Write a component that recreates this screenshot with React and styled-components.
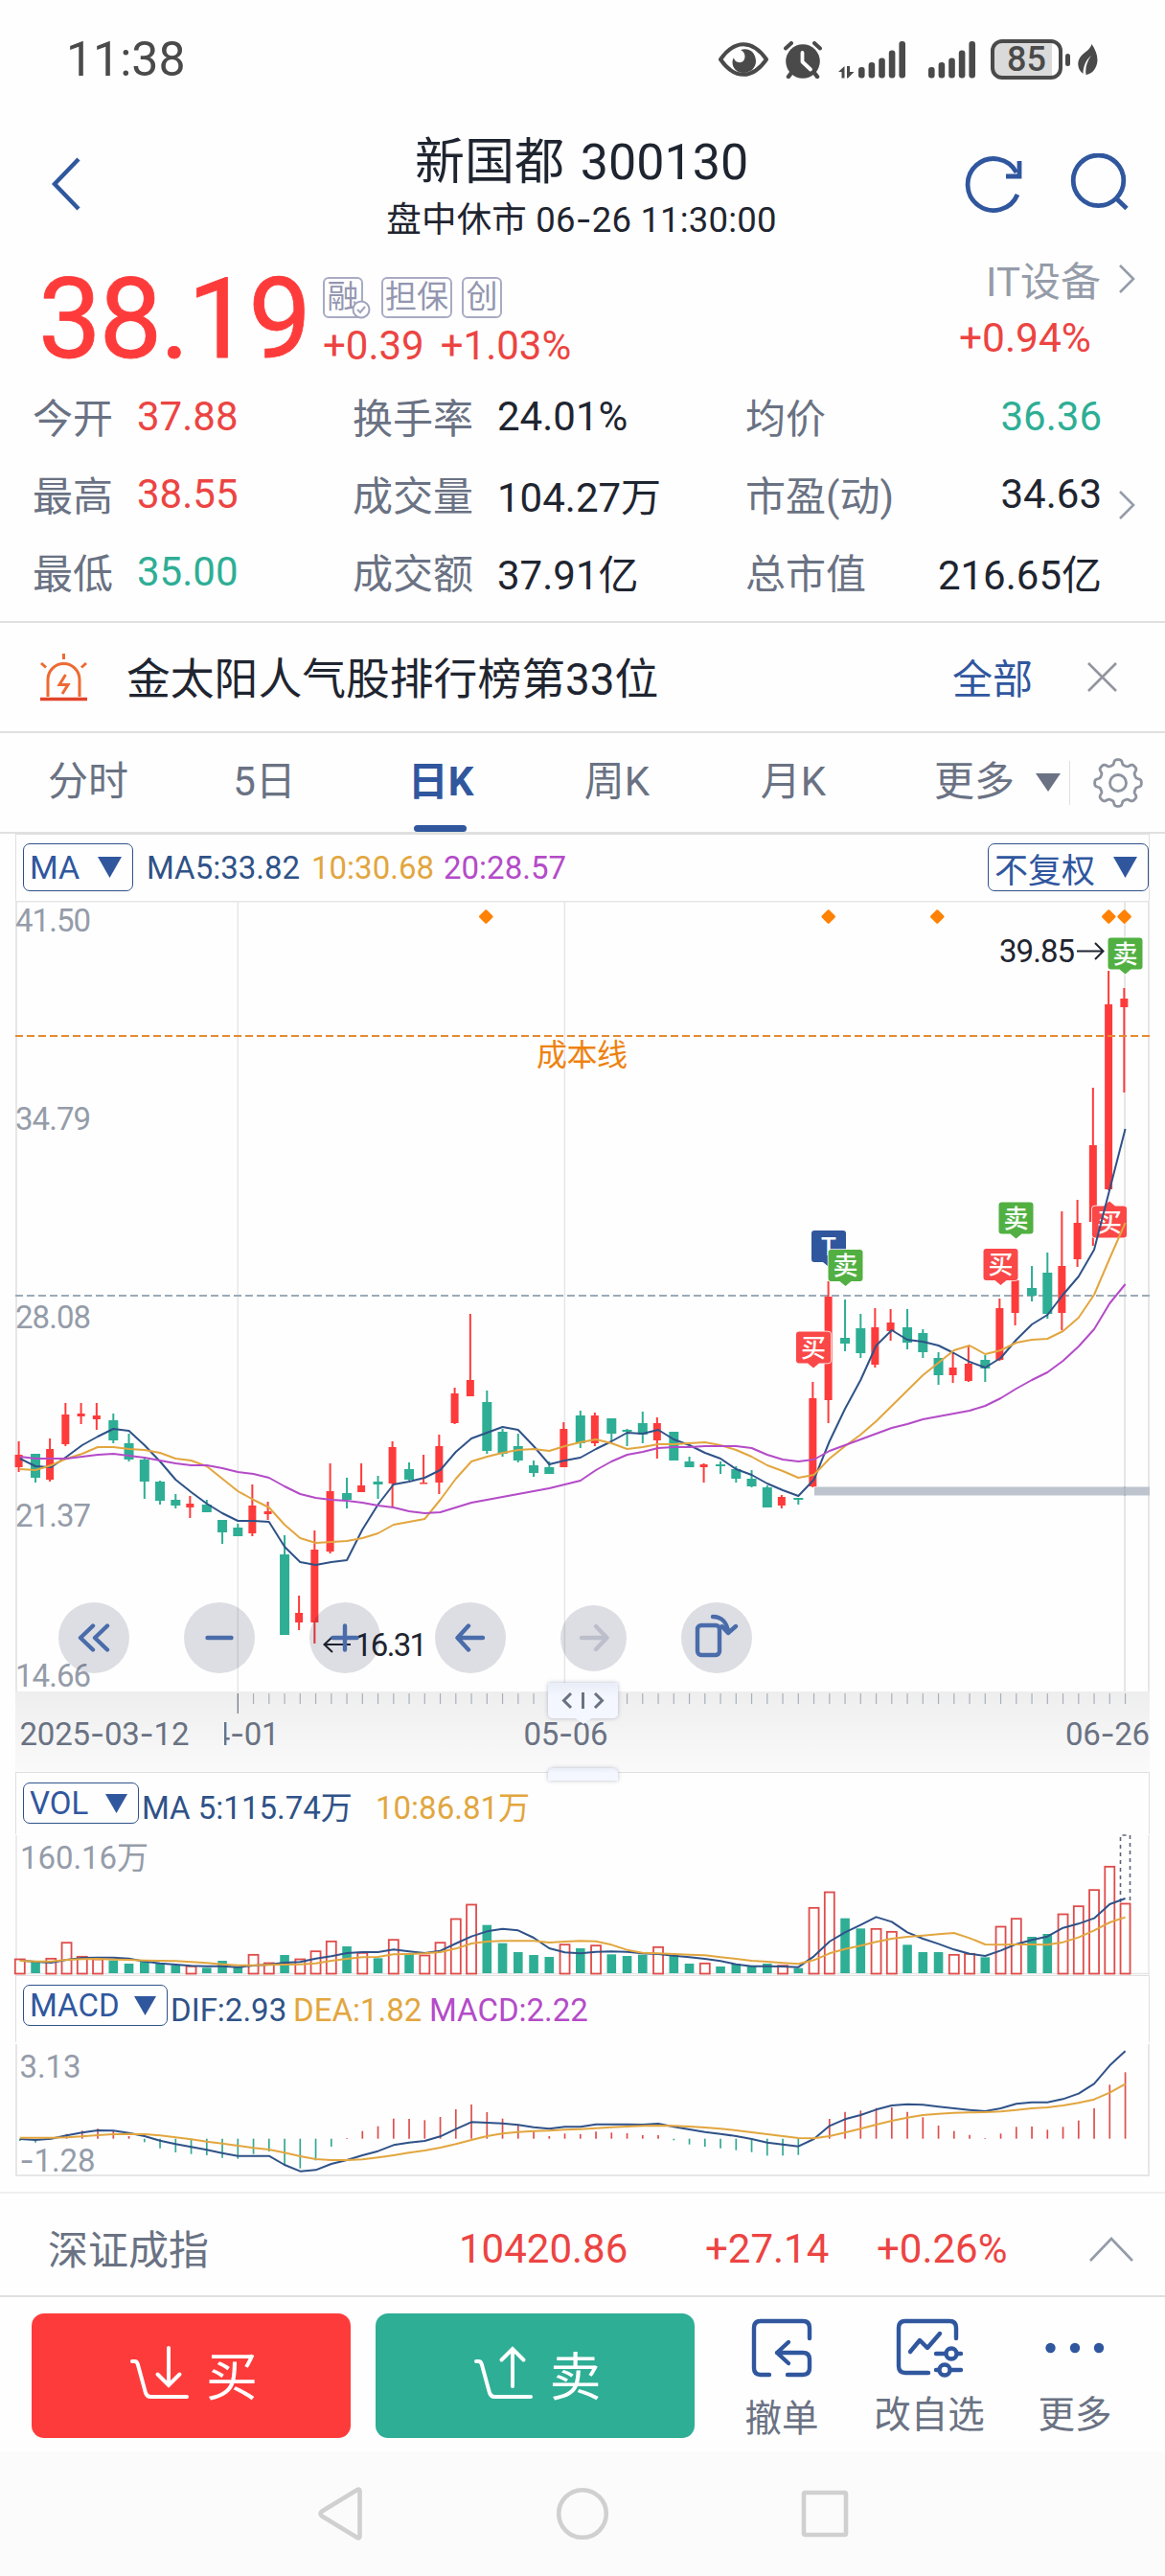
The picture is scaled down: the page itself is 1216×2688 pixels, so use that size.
import styled, { createGlobalStyle } from "styled-components";

const RED = "#fe3b3b";
const GREEN = "#2eae95";
const BLUE = "#30579e";
const NAVY = "#2f5288";
const YELLOW = "#e2a63f";
const PURPLE = "#b44bc8";
const GRAY = "#6a7283";
const LIGHT = "#959ca9";
const DARK = "#1f2530";
const LINE = "#e0e0e0";
const TEXT_RED = "#ec4442";

const GlobalStyle = createGlobalStyle`
  * {
    box-sizing: border-box;
  }

  body {
    margin: 0;
    background: #fefefe;
    color: ${DARK};
    font-family: Roboto, "Noto Sans CJK SC", sans-serif;
    font-size: 42px;
    white-space: nowrap;
  }

  svg {
    display: block;
    flex: none;
  }
`;

const Screen = styled.div`
  width: 1216px;
  height: 2688px;
  overflow: hidden;
`;

const StatusBar = styled.div`
  display: flex;
  justify-content: space-between;
  align-items: center;
  height: 124px;
  padding: 0 70px 0 69px;
  color: #4a4a4a;
  font-size: 50px;
`;

const StatusIcons = styled.div`
  display: flex;
  align-items: center;
`;

const Gap = styled.div`
  width: ${(p) => p.w}px;
`;

const Battery = styled.div`
  display: flex;
  align-items: center;
  justify-content: center;
  width: 75px;
  height: 42px;
  border: 4px solid #4a4a4a;
  border-radius: 12px;
  background: linear-gradient(to right, #dadada 60px, #fefefe 60px);
  font-size: 36px;
  font-weight: 500;
  line-height: 34px;
`;

const BatteryNub = styled.div`
  width: 5px;
  height: 13px;
  margin: 0 8px 0 3px;
  border-radius: 3px;
  background: #4a4a4a;
`;

const Header = styled.div`
  display: grid;
  grid-template-columns: 1fr auto 1fr;
  align-items: center;
  height: 136px;
  padding: 0 37px 0 35px;
`;

const BackIcon = styled.svg`
  margin-left: 14px;
`;

const Titles = styled.div`
  margin-top: 13px;
  text-align: center;
`;

const Title = styled.div`
  font-size: 52px;
  line-height: 61px;
  word-spacing: 4px;
`;

const SubTitle = styled.div`
  font-size: 36.5px;
  line-height: 58px;
  letter-spacing: 0.2px;
`;

const Dash = styled.span`
  font-family: Inter, sans-serif;
`;

const HeaderActions = styled.div`
  display: flex;
  justify-content: flex-end;
  gap: 46px;
`;

const Quote = styled.div`
  display: flex;
  height: 135px;
  padding-left: 40px;
`;

const Price = styled.div`
  width: 297px;
  color: ${RED};
  font-size: 117px;
  font-weight: 400;
  letter-spacing: -2.2px;
  line-height: 147px;
  -webkit-text-stroke: 0.8px ${RED};
`;

const QuoteInfo = styled.div`
  flex: 1;
`;

const Tags = styled.div`
  display: flex;
  margin-top: 29px;
`;

const Tag = styled.div`
  position: relative;
  width: ${(p) => p.w}px;
  height: 43px;
  margin-right: ${(p) => p.gap}px;
  border: 2px solid #a9abc4;
  border-radius: 6px;
  color: #9396b0;
  font-size: 33px;
  line-height: 38px;
  text-align: center;
`;

const TagCheck = styled.svg`
  position: absolute;
  right: -10px;
  bottom: -3px;
`;

const Change = styled.div`
  display: flex;
  gap: 17px;
  color: ${TEXT_RED};
  font-size: 42px;
  line-height: 58px;
`;

const Industry = styled.div`
  padding-right: 31px;
`;

const IndustryName = styled.div`
  display: flex;
  align-items: center;
  justify-content: flex-end;
  gap: 18px;
  height: 61px;
  color: ${LIGHT};
`;

const IndustryChange = styled.div`
  padding-right: 46px;
  color: ${TEXT_RED};
  font-size: 42.5px;
  line-height: 64px;
  text-align: right;
`;

const Stats = styled.div`
  display: grid;
  grid-template-columns: 109px 225px 151px 259px 180px 192px 66px;
  grid-template-rows: repeat(3, 81px);
  align-items: center;
  height: 255px;
  padding-left: 34px;
  border-bottom: 2px solid ${LINE};
`;

const StatLabel = styled.div`
  margin-top: -5px;
  color: ${GRAY};
`;

const StatValue = styled.div`
  margin-top: -2px;
  color: ${(p) => p.color || DARK};
  text-align: ${(p) => (p.$end ? "right" : "left")};
`;

const StatMore = styled.div`
  grid-column: 7;
  grid-row: 2;
  padding: 20px 0 0 17px;
`;

const Notice = styled.div`
  display: flex;
  align-items: center;
  height: 115px;
  padding: 0 50px 0 41px;
  border-bottom: 2px solid ${LINE};
`;

const NoticeText = styled.div`
  flex: 1;
  margin: -4px 0 0 40px;
  font-size: 45.8px;
`;

const NoticeAll = styled.div`
  margin: -2px 57px 0 0;
  color: ${BLUE};
`;

const Tabs = styled.div`
  display: flex;
  height: 105px;
  border-bottom: 2px solid ${LINE};
  color: ${GRAY};
  line-height: 102px;
`;

const Tab = styled.div`
  position: relative;
  width: 184px;
  text-align: center;
  color: ${(p) => (p.$active ? BLUE : GRAY)};
  font-weight: ${(p) => (p.$active ? 700 : 400)};

  &::after {
    content: "";
    display: ${(p) => (p.$active ? "block" : "none")};
    position: absolute;
    left: 64px;
    bottom: 0;
    width: 55px;
    height: 7px;
    border-radius: 4px;
    background: ${BLUE};
  }
`;

const MoreTab = styled.div`
  display: flex;
  align-items: center;
  gap: 22px;
  width: 196px;
  height: 102px;
  padding-left: 55px;
`;

const TabSettings = styled.div`
  display: flex;
  align-items: center;
  height: 46px;
  margin-top: 29px;
  padding-left: 24px;
  border-left: 1px solid ${LINE};
`;

const IndicatorBar = styled.div`
  display: flex;
  align-items: flex-start;
  height: ${(p) => p.h}px;
  margin: 0 16px;
  padding: ${(p) => p.top}px 0 0 7px;
  border: 1px solid ${LINE};
  border-bottom: none;
`;

const Select = styled.div`
  display: flex;
  align-items: center;
  justify-content: space-between;
  width: ${(p) => p.w}px;
  height: ${(p) => p.h}px;
  padding: 0 11px 0 6px;
  border: 1.5px solid ${NAVY};
  border-radius: 7px;
  color: ${BLUE};
  font-size: ${(p) => p.size}px;
`;

const Legend = styled.div`
  width: ${(p) => p.w}px;
  color: ${(p) => p.color};
  font-size: 33px;
  line-height: ${(p) => p.lh}px;
`;

const Spacer = styled.div`
  flex: 1;
`;

const PriceChart = styled.div`
  position: relative;
  height: 909px;
`;

const ChartTools = styled.div`
  position: absolute;
  left: 61px;
  top: 732px;
  display: flex;
  align-items: center;
  height: 74px;
`;

const ToolButton = styled.div`
  display: flex;
  align-items: center;
  justify-content: center;
  width: ${(p) => p.size || 74}px;
  height: ${(p) => p.size || 74}px;
  margin-right: ${(p) => p.gap || 57}px;
  border-radius: 50%;
  background: rgba(0, 8, 48, 0.13);
`;

const Handle = styled.div`
  position: absolute;
  left: 572px;
  top: ${(p) => p.top}px;
  width: 73px;
  height: ${(p) => p.h}px;
  border-radius: ${(p) => p.radius};
  background: linear-gradient(#e9edf7, #f4f7ff 40%);
  box-shadow: 0 0 4px rgba(80, 90, 120, 0.4);
`;

const IndexBar = styled.div`
  display: grid;
  grid-template-columns: 429px 257px 179px 222px 1fr;
  align-items: center;
  height: 110px;
  padding: 9px 0 0 50px;
  border-top: 2px solid #f0f0f0;
  border-bottom: 2px solid ${LINE};
  color: ${TEXT_RED};
`;

const ActionBar = styled.div`
  display: flex;
  height: 161px;
  padding: 17px 0 0 33px;
`;

const TradeButton = styled.div`
  display: flex;
  align-items: center;
  justify-content: center;
  gap: 17px;
  width: 333px;
  height: 130px;
  margin-right: 25.5px;
  padding: 0 0 6px 6px;
  border-radius: 13px;
  background: ${(p) => p.color};
  color: #fff;
  font-size: 54px;
`;

const Action = styled.div`
  display: flex;
  flex-direction: column;
  align-items: center;
  width: ${(p) => p.w}px;
  margin-left: ${(p) => p.left}px;
  padding-top: 4px;
  color: ${GRAY};
  font-size: 38.5px;
  line-height: ${(p) => p.lh}px;
`;

const NavBar = styled.div`
  display: flex;
  height: 130px;
  padding: 36px 0 0 329px;
  background: #fbfbfb;
`;

// y pixels: colour, high, body top, body bottom, low
const candles = [
  ["r", 1504, 1518, 1531, 1536], ["g", 1517, 1517, 1542, 1547], ["r", 1501, 1512, 1544, 1546],
  ["r", 1464, 1476, 1507, 1509], ["r", 1464, 1475, 1478, 1486], ["r", 1464, 1477, 1481, 1492],
  ["g", 1475, 1482, 1503, 1506], ["g", 1496, 1506, 1523, 1525], ["g", 1520, 1523, 1546, 1564],
  ["g", 1545, 1546, 1566, 1570], ["g", 1559, 1565, 1571, 1574], ["r", 1561, 1569, 1573, 1584],
  ["g", 1565, 1570, 1578, 1578], ["g", 1586, 1586, 1599, 1611], ["g", 1590, 1594, 1603, 1603],
  ["r", 1549, 1571, 1600, 1603], ["r", 1567, 1577, 1580, 1586], ["g", 1602, 1622, 1706, 1706],
  ["r", 1665, 1683, 1693, 1701], ["r", 1597, 1617, 1693, 1715], ["r", 1527, 1556, 1619, 1621],
  ["g", 1542, 1558, 1565, 1574], ["r", 1527, 1550, 1557, 1557], ["g", 1540, 1546, 1549, 1564],
  ["r", 1504, 1510, 1548, 1573], ["g", 1526, 1533, 1544, 1545], ["r", 1518, 1547, 1548, 1548],
  ["r", 1497, 1509, 1547, 1559], ["r", 1448, 1454, 1485, 1486], ["r", 1371, 1440, 1457, 1457],
  ["g", 1451, 1463, 1514, 1517], ["g", 1491, 1494, 1517, 1520], ["g", 1496, 1509, 1524, 1526],
  ["g", 1524, 1529, 1537, 1541], ["g", 1525, 1531, 1538, 1538], ["r", 1484, 1491, 1531, 1531],
  ["g", 1472, 1477, 1506, 1511], ["r", 1474, 1477, 1506, 1509], ["g", 1480, 1480, 1496, 1504],
  ["g", 1491, 1492, 1494, 1509], ["g", 1473, 1485, 1497, 1506], ["r", 1479, 1485, 1503, 1522],
  ["g", 1494, 1494, 1524, 1524], ["g", 1520, 1525, 1531, 1531], ["r", 1527, 1528, 1531, 1547],
  ["g", 1525, 1528, 1530, 1538], ["g", 1530, 1533, 1543, 1547], ["g", 1534, 1543, 1551, 1552],
  ["g", 1550, 1552, 1573, 1573], ["r", 1560, 1562, 1571, 1574], ["g", 1563, 1563, 1565, 1570],
  ["r", 1442, 1459, 1551, 1552], ["r", 1337, 1353, 1461, 1485], ["g", 1356, 1396, 1402, 1410],
  ["g", 1371, 1386, 1412, 1417], ["r", 1365, 1385, 1424, 1427], ["r", 1366, 1380, 1389, 1399],
  ["g", 1366, 1385, 1401, 1408], ["g", 1387, 1391, 1411, 1417], ["g", 1411, 1417, 1435, 1445],
  ["r", 1411, 1427, 1435, 1443], ["r", 1404, 1423, 1441, 1442], ["g", 1414, 1419, 1428, 1442],
  ["r", 1355, 1365, 1419, 1420], ["r", 1330, 1336, 1370, 1383], ["g", 1321, 1344, 1352, 1358],
  ["g", 1307, 1328, 1371, 1376], ["r", 1264, 1321, 1370, 1388], ["r", 1252, 1276, 1314, 1322],
  ["r", 1135, 1195, 1275, 1300], ["r", 1013, 1048, 1241, 1242], ["r", 1031, 1042, 1051, 1140],
];

const ma5 = [
  1522, 1530, 1531, 1520, 1508, 1499, 1491, 1493, 1508, 1525, 1544, 1557, 1569, 1579, 1587, 1587, 1588, 1614,
  1630, 1633, 1630, 1628, 1596, 1570, 1549, 1546, 1542, 1534, 1515, 1501, 1495, 1489, 1492, 1509, 1528, 1524,
  1521, 1512, 1504, 1495, 1496, 1492, 1502, 1508, 1516, 1522, 1533, 1539, 1548, 1555, 1561, 1544, 1504, 1470,
  1440, 1404, 1388, 1398, 1400, 1404, 1412, 1421, 1427, 1417, 1398, 1382, 1372, 1351, 1332, 1304, 1241, 1178,
];
const ma10 = [
  1533, 1534, 1529, 1522, 1517, 1510, 1510, 1512, 1513, 1516, 1522, 1524, 1530, 1543, 1556, 1565, 1573, 1591,
  1605, 1610, 1609, 1608, 1605, 1600, 1591, 1588, 1585, 1565, 1543, 1525, 1520, 1516, 1513, 1512, 1514, 1509,
  1505, 1502, 1506, 1512, 1510, 1507, 1507, 1506, 1505, 1508, 1513, 1520, 1529, 1535, 1542, 1539, 1522, 1509,
  1497, 1483, 1467, 1451, 1435, 1422, 1409, 1404, 1413, 1409, 1401, 1398, 1397, 1389, 1375, 1351, 1313, 1276,
];
const ma20 = [
  1520, 1522, 1522, 1522, 1520, 1518, 1517, 1519, 1521, 1524, 1527, 1529, 1529, 1532, 1536, 1538, 1542, 1551,
  1559, 1563, 1565, 1566, 1568, 1571, 1573, 1577, 1579, 1578, 1573, 1568, 1565, 1562, 1559, 1556, 1553, 1549,
  1545, 1534, 1525, 1518, 1515, 1511, 1510, 1510, 1509, 1509, 1509, 1511, 1518, 1523, 1525, 1523, 1514, 1508,
  1502, 1496, 1490, 1486, 1481, 1478, 1475, 1472, 1467, 1459, 1449, 1440, 1432, 1420, 1405, 1387, 1360, 1340,
];

// lower panels are kept in thirds of a pixel below y = 1840
const volumes = [
  612, 620, 610, 560, 604, 612, 617, 627, 620, 625, 632, 634, 640, 618, 637, 598, 624, 600,
  612, 587, 556, 573, 592, 610, 551, 597, 600, 560, 486, 441, 506, 563, 591, 600, 606, 566,
  579, 569, 598, 603, 599, 574, 600, 627, 625, 636, 628, 636, 627, 632, 641, 451, 402, 485,
  517, 517, 526, 568, 591, 591, 598, 595, 607, 510, 485, 543, 534, 471, 446, 395, 322, 438,
];
const volMa5 = [
  617, 621, 624, 615, 609, 608, 608, 611, 620, 626, 630, 634, 635, 635, 638, 633, 630, 624,
  622, 611, 604, 594, 591, 591, 583, 589, 594, 587, 564, 542, 526, 518, 523, 546, 579, 592,
  595, 590, 589, 590, 595, 597, 602, 607, 612, 619, 629, 635, 635, 636, 638, 604, 558, 529,
  506, 481, 496, 529, 549, 565, 583, 596, 603, 586, 566, 553, 542, 515, 502, 485, 441, 423,
];
const volMa10 = [
  618, 620, 620, 615, 613, 612, 614, 615, 617, 618, 619, 622, 625, 629, 632, 632, 631, 630,
  629, 626, 618, 612, 607, 606, 598, 597, 595, 591, 580, 564, 558, 556, 556, 556, 561, 558,
  556, 557, 568, 584, 593, 595, 597, 599, 601, 607, 612, 618, 621, 625, 628, 616, 595, 581,
  571, 559, 549, 543, 539, 535, 531, 547, 567, 568, 567, 567, 568, 560, 545, 523, 498, 482,
];
const macd = [
  1182, 1187, 1177, 1160, 1150, 1144, 1152, 1167, 1186, 1205, 1218, 1223, 1227, 1235, 1238, 1223, 1215, 1260,
  1268, 1243, 1200, 1173, 1151, 1136, 1112, 1113, 1117, 1107, 1083, 1068, 1092, 1112, 1130, 1153, 1167, 1159,
  1161, 1153, 1156, 1158, 1164, 1164, 1180, 1193, 1200, 1205, 1211, 1217, 1228, 1228, 1226, 1175, 1113, 1091,
  1087, 1079, 1077, 1091, 1108, 1134, 1151, 1163, 1173, 1159, 1138, 1137, 1147, 1138, 1118, 1080, 1006, 967,
];
const dif = [
  1176, 1179, 1175, 1165, 1156, 1149, 1150, 1157, 1167, 1181, 1192, 1201, 1210, 1220, 1229, 1229, 1229, 1257,
  1277, 1273, 1254, 1242, 1227, 1214, 1195, 1187, 1182, 1168, 1145, 1123, 1125, 1127, 1132, 1139, 1144, 1138,
  1138, 1130, 1130, 1130, 1131, 1128, 1138, 1146, 1154, 1160, 1167, 1176, 1187, 1193, 1199, 1176, 1135, 1114,
  1101, 1084, 1071, 1067, 1069, 1075, 1080, 1085, 1089, 1080, 1066, 1061, 1061, 1051, 1034, 1003, 946, 901,
];
const dea = [
  1172, 1172, 1172, 1171, 1168, 1164, 1161, 1160, 1161, 1165, 1171, 1177, 1184, 1190, 1197, 1204, 1209, 1219,
  1230, 1239, 1242, 1242, 1240, 1234, 1227, 1219, 1212, 1203, 1192, 1179, 1167, 1159, 1154, 1151, 1150, 1147,
  1145, 1142, 1139, 1137, 1135, 1134, 1135, 1137, 1140, 1144, 1149, 1155, 1161, 1167, 1173, 1174, 1167, 1156,
  1144, 1131, 1119, 1109, 1101, 1097, 1094, 1093, 1092, 1090, 1085, 1080, 1077, 1071, 1063, 1052, 1031, 1004,
];

const stats = [
  ["今开", "37.88", TEXT_RED, "换手率", "24.01%", "均价", "36.36", GREEN],
  ["最高", "38.55", TEXT_RED, "成交量", "104.27万", "市盈(动)", "34.63", DARK],
  ["最低", "35.00", GREEN, "成交额", "37.91亿", "总市值", "216.65亿", DARK],
];

const badges = [
  { x: 847, y: 1284, text: "T", color: BLUE },
  { x: 864.5, y: 1304, text: "卖", color: "#52b043" },
  { x: 831, y: 1389.5, text: "买", color: "#fa4848" },
  { x: 1026.5, y: 1303, text: "买", color: "#fa4848" },
  { x: 1042.5, y: 1254.5, text: "卖", color: "#52b043" },
  { x: 1140, y: 1258.5, text: "买", color: "#fa4848", up: true },
  { x: 1156.5, y: 978.5, text: "卖", color: "#52b043" },
];

const xAt = (i) => 20.8 + 16.25 * i;
const lowerY = (v) => 1840 + v / 3;
const toPoints = (list, y = (v) => v) => list.map((v, i) => `${xAt(i)},${y(v)}`).join(" ");

const Curve = ({ list, y, color }) => (
  <polyline points={toPoints(list, y)} fill="none" stroke={color} strokeWidth="2" strokeLinejoin="round" />
);

const Label = ({ x, y, w, color = LIGHT, children }) => (
  <text x={x} y={y} textLength={w} fill={color} fontSize="33">
    {children}
  </text>
);

const AxisDate = ({ x, w, children }) => (
  <text x={x} y="1820.5" textLength={w} fill={GRAY} fontSize="33">
    {children.split(/(-)/).map((part, i) => (
      <tspan key={i} fontFamily={part === "-" ? "Inter" : undefined}>
        {part}
      </tspan>
    ))}
  </text>
);

const Badge = ({ x, y, text, color, up }) => (
  <g transform={`translate(${x} ${y})`}>
    <path
      d={
        up
          ? "M3 0H12L18 -5L24 0H33Q36 0 36 3V30Q36 33 33 33H3Q0 33 0 30V3Q0 0 3 0Z"
          : "M3 0H33Q36 0 36 3V30Q36 33 33 33H24L18 38L12 33H3Q0 33 0 30V3Q0 0 3 0Z"
      }
      fill={color}
      stroke="#fff"
      strokeWidth="1.5"
      paintOrder="stroke"
    />
    <text x="18" y="26" textAnchor="middle" fill="#fff" fontSize="26" fontWeight="500">
      {text}
    </text>
  </g>
);

const Chevron = ({ color = LIGHT }) => (
  <svg width="18" height="32" viewBox="0 0 18 32" fill="none" stroke={color} strokeWidth="2.6">
    <path d="M2 2L16 16L2 30" />
  </svg>
);

const Triangle = ({ w = 25, h = 22, color = BLUE }) => (
  <svg width={w} height={h} viewBox="0 0 10 10" preserveAspectRatio="none">
    <path d="M0 0H10L5 10Z" fill={color} />
  </svg>
);

const Signal = ({ arrows }) => (
  <svg width={arrows ? 70 : 49} height="40" viewBox={arrows ? "-21 0 70 40" : "0 0 49 40"} fill="#4a4a4a">
    {[28, 23, 18.5, 10.5, 1].map((top, i) => (
      <rect key={i} x={i * 10.6} y={top} width="6.6" height={39.5 - top} rx="3" />
    ))}
    {arrows && <path d="M-21 33L-14.5 27V39.5H-17.5V33ZM-12 27H-9V33H-4.5L-11 39.5H-12Z" />}
  </svg>
);

const gearPath = () => {
  const points = [];
  for (let i = 0; i <= 160; i++) {
    const a = (i / 160) * Math.PI * 2;
    const r = 21.8 + 2.6 * Math.tanh(2.2 * Math.cos(8 * a));
    points.push(`${(26 + r * Math.sin(a)).toFixed(2)} ${(26 - r * Math.cos(a)).toFixed(2)}`);
  }
  return `M${points.join("L")}Z`;
};

const KLine = () => (
  <svg width="1216" height="909" viewBox="0 940 1216 909">
    <defs>
      <linearGradient id="axis" x1="0" y1="0" x2="0" y2="1">
        <stop offset="0" stopColor="#eeeeee" />
        <stop offset="1" stopColor="#fafafa" />
      </linearGradient>
      <clipPath id="dateClip">
        <rect x="234" y="1780" width="100" height="60" />
      </clipPath>
    </defs>

    <g stroke="#e6e6e6" strokeWidth="1.5">
      <path d="M16 940.5H1200" strokeWidth="2" />
      <path d="M17 940V1765M1199 940V1765M1174 940V1765" strokeWidth="2" />
      <path d="M248.3 940V1765M589.4 940V1765" />
    </g>

    <rect x="850" y="1551.5" width="350" height="9" fill="#bdc4cd" />
    <path d="M1174 1551V1561" stroke="#b2b8c6" strokeWidth="2" />

    <Label x="16" y="972" w="79">41.50</Label>
    <Label x="16" y="1179" w="79">34.79</Label>
    <Label x="16" y="1386" w="79">28.08</Label>
    <Label x="16" y="1593" w="79">21.37</Label>
    <Label x="16" y="1760" w="79">14.66</Label>

    <path d="M16 1352H1200" stroke="#9babb8" strokeWidth="2" strokeDasharray="8 4" />

    {candles.map(([kind, high, top, bottom, low], i) => {
      const up = kind === "r";
      const x = up ? xAt(i) - 1.2 : xAt(i);
      const half = up ? 4 : 5;
      const color = up ? RED : GREEN;
      return (
        <g key={i} fill={color}>
          <rect x={x - 1} y={high} width="2" height={low - high} />
          <rect x={x - half} y={top} width={half * 2} height={Math.max(bottom - top, 1.5)} />
        </g>
      );
    })}

    {badges.map((b, i) => (
      <Badge key={i} {...b} />
    ))}

    <path d="M16 1081H1200" stroke="#e58a30" strokeWidth="2" strokeDasharray="8 4" />
    <text x="560" y="1112" fill="#ee820f" fontSize="32" textLength="95">
      成本线
    </text>

    <Curve list={ma5} color={NAVY} />
    <Curve list={ma10} color={YELLOW} />
    <Curve list={ma20} color={PURPLE} />

    {[507.3, 864.7, 978.3, 1157.3, 1173.6].map((x) => (
      <path
        key={x}
        d={`M${x} 950.5L${x + 6} 956.5L${x} 962.5L${x - 6} 956.5Z`}
        fill="#ff8204"
        stroke="#ff8204"
        strokeWidth="2.5"
        strokeLinejoin="round"
      />
    ))}

    <Label x="1043" y="1003.5" w="79" color={DARK}>39.85</Label>
    <path d="M1124 992.5H1151M1143 984L1151.5 992.5L1143 1001" fill="none" stroke={DARK} strokeWidth="2" />
    <path d="M338 1716H366M347 1708L338.5 1716L347 1724" fill="none" stroke={DARK} strokeWidth="2" />
    <Label x="370" y="1728" w="76" color={DARK}>16.31</Label>

    <rect x="16" y="1765" width="1184" height="84" fill="url(#axis)" />
    {candles.map((_, i) =>
      i < 14 ? null : (
        <path
          key={i}
          d={`M${xAt(i)} 1767V${i === 14 ? 1788 : 1778}`}
          stroke={i === 14 ? GRAY : "#a9afbb"}
          strokeWidth="1.2"
        />
      )
    )}
    <AxisDate x="20.5" w="177">2025-03-12</AxisDate>
    <g clipPath="url(#dateClip)">
      <AxisDate x="203.5" w="88">04-01</AxisDate>
    </g>
    <AxisDate x="546.5" w="88">05-06</AxisDate>
    <AxisDate x="1112" w="88">06-26</AxisDate>
  </svg>
);

const Volume = () => (
  <svg width="1216" height="147" viewBox="0 1914 1216 147">
    <path d="M17 1915V2060M1199 1915V2060M16 2059.5H1200" stroke="#e6e6e6" strokeWidth="1.5" />
    <Label x="21" y="1950" w="134">160.16万</Label>
    {volumes.map((v, i) => {
      const top = lowerY(v);
      return candles[i][0] === "r" ? (
        <rect
          key={i}
          x={xAt(i) - 5}
          y={top + 0.5}
          width="10"
          height={2059 - top}
          fill="#fefefe"
          stroke="#df4c4a"
          strokeWidth="1.8"
        />
      ) : (
        <rect key={i} x={xAt(i) - 4.8} y={top} width="9.6" height={2059 - top} fill={GREEN} />
      );
    })}
    <path d="M1169.5 1985V1915H1179.5V1985" fill="none" stroke="#5c6577" strokeWidth="1.6" strokeDasharray="4 4" />
    <Curve list={volMa5} y={lowerY} color={NAVY} />
    <Curve list={volMa10} y={lowerY} color={YELLOW} />
  </svg>
);

const Macd = () => (
  <svg width="1216" height="156" viewBox="0 2131 1216 156">
    <path d="M17 2133V2270H1199V2133" fill="none" stroke="#e6e6e6" strokeWidth="2" />
    <Label x="20.5" y="2168" w="64">3.13</Label>
    <text x="20.5" y="2266" textLength="79" fill={LIGHT} fontSize="33">
      <tspan fontFamily="Inter">-</tspan>1.28
    </text>
    {macd.map((v, i) => (
      <path
        key={i}
        d={`M${xAt(i)} 2231.7V${lowerY(v)}`}
        stroke={v > 1175 ? "#35a892" : "#dc4f4d"}
        strokeWidth="1.7"
      />
    ))}
    <Curve list={dif} y={lowerY} color={NAVY} />
    <Curve list={dea} y={lowerY} color={YELLOW} />
  </svg>
);

const tool = { fill: "none", stroke: "#4a6caa", strokeWidth: 4.4, strokeLinecap: "round", strokeLinejoin: "round" };

const App = () => (
  <Screen>
    <GlobalStyle />

    <StatusBar>
      <div>11:38</div>
      <StatusIcons>
        <svg width="52" height="36" viewBox="0 0 52 36">
          <path
            d="M2 18C9 8 17 2.2 26 2.2S43 8 50 18C43 28 35 33.8 26 33.8S9 28 2 18Z"
            fill="none"
            stroke="#4a4a4a"
            strokeWidth="4"
            strokeLinejoin="round"
          />
          <path d="M23 8C32 5 39 11 39 20C39 27 33 32 26 32C19 32 14.5 27 14.5 21C14.5 19 15 17.5 16 16.5C17 22 27 24 27.5 15C27.5 12 26 9.5 23 8Z" fill="#4a4a4a" />
        </svg>
        <Gap w={16} />
        <svg width="40" height="39" viewBox="0 0 40 39" fill="none" stroke="#4a4a4a" strokeLinecap="round">
          <circle cx="20" cy="21" r="17.8" fill="#4a4a4a" stroke="none" />
          <path d="M2 7.5L8 2M38 7.5L32 2" strokeWidth="4" />
          <path d="M8 33L5 37M32 33L35 37" strokeWidth="4.5" />
          <path d="M19.5 12V21.5L28 29.5" stroke="#fff" strokeWidth="3.8" strokeLinejoin="round" />
        </svg>
        <Gap w={17} />
        <Signal arrows />
        <Gap w={24} />
        <Signal />
        <Gap w={16} />
        <Battery>85</Battery>
        <BatteryNub />
        <svg width="21" height="33" viewBox="0 0 21 33">
          <path d="M14.5 0C20 8 22.5 17 18.5 24.5C16.5 29 12.5 31.5 8.5 32C7.5 25 9.5 18 14 12C8 17 5.5 24 5.5 31C-1 26 -1 18 3 13C7 8 13 6 14.5 0Z" fill="#4a4a4a" />
        </svg>
      </StatusIcons>
    </StatusBar>

    <Header>
      <BackIcon width="40" height="60" viewBox="0 0 40 60" fill="none" stroke={BLUE} strokeWidth="4.4">
        <path d="M33 4L8 30L33 56" />
      </BackIcon>
      <Titles>
        <Title>新国都 300130</Title>
        <SubTitle>
          盘中休市 06<Dash>-</Dash>26 11:30:00
        </SubTitle>
      </Titles>
      <HeaderActions>
        <svg width="64" height="64" viewBox="0 0 64 64" fill="none" stroke={BLUE} strokeWidth="4.8">
          <path d="M57 43A27 27 0 1 1 56 20" />
          <path d="M59 8V24H45" />
        </svg>
        <svg width="64" height="64" viewBox="0 0 64 64" fill="none" stroke={BLUE} strokeWidth="4.8">
          <circle cx="31.5" cy="28.3" r="26.3" />
          <path d="M49 46L61 57.5" />
        </svg>
      </HeaderActions>
    </Header>

    <Quote>
      <Price>38.19</Price>
      <QuoteInfo>
        <Tags>
          <Tag w={42} gap={19}>
            融
            <TagCheck width="20" height="20" viewBox="0 0 20 20" stroke="#a0a3bd" strokeWidth="2">
              <circle cx="10" cy="10" r="8.5" fill="#fff" />
              <path d="M6 10L9 13L14 7" fill="none" />
            </TagCheck>
          </Tag>
          <Tag w={74} gap={10}>担保</Tag>
          <Tag w={42} gap={0}>创</Tag>
        </Tags>
        <Change>
          <span>+0.39</span>
          <span>+1.03%</span>
        </Change>
      </QuoteInfo>
      <Industry>
        <IndustryName>
          IT设备
          <Chevron />
        </IndustryName>
        <IndustryChange>+0.94%</IndustryChange>
      </Industry>
    </Quote>

    <Stats>
      {stats.map(([l1, v1, c1, l2, v2, l3, v3, c3]) => [
        <StatLabel key={l1}>{l1}</StatLabel>,
        <StatValue key={l1 + v1} color={c1}>{v1}</StatValue>,
        <StatLabel key={l2}>{l2}</StatLabel>,
        <StatValue key={l2 + v2}>{v2}</StatValue>,
        <StatLabel key={l3}>{l3}</StatLabel>,
        <StatValue key={l3 + v3} color={c3} $end>{v3}</StatValue>,
        l1 === "最高" ? (
          <StatMore key="more"><Chevron /></StatMore>
        ) : (
          <div key={l1 + "end"} />
        ),
      ])}
    </Stats>

    <Notice>
      <svg width="51" height="51" viewBox="0 0 51 51" fill="none" stroke="#ee6a33" strokeWidth="3">
        <path d="M9 46V28A16.5 16.5 0 0 1 42 28V46" />
        <path d="M1 48.5H50" stroke="#e2442b" strokeWidth="3.5" />
        <path d="M25.5 1V7M2 11L7 15.5M49 11L44 15.5" />
        <path d="M27.5 23L21 33.5H30L24 43" />
      </svg>
      <NoticeText>金太阳人气股排行榜第33位</NoticeText>
      <NoticeAll>全部</NoticeAll>
      <svg width="31" height="31" viewBox="0 0 31 31" stroke="#92959f" strokeWidth="2.6">
        <path d="M1 1L30 30M30 1L1 30" />
      </svg>
    </Notice>

    <Tabs>
      <Tab>分时</Tab>
      <Tab>5日</Tab>
      <Tab $active>日K</Tab>
      <Tab>周K</Tab>
      <Tab>月K</Tab>
      <MoreTab>
        更多
        <Triangle w={26} h={19} color={GRAY} />
      </MoreTab>
      <TabSettings>
        <svg width="52" height="52" viewBox="0 0 52 52" fill="none" stroke="#8d939f" strokeWidth="2.8">
          <path d={gearPath()} />
          <circle cx="26" cy="26" r="8.5" />
        </svg>
      </TabSettings>
    </Tabs>

    <IndicatorBar h={70} top={9}>
      <Select w={115} h={50} size={34}>
        MA
        <Triangle />
      </Select>
      <Spacer />
      <Legend w={172} lh={51} color={NAVY}>MA5:33.82</Legend>
      <Legend w={138} lh={51} color={YELLOW}>10:30.68</Legend>
      <Legend w={568} lh={51} color={PURPLE}>20:28.57</Legend>
      <Select w={168} h={50} size={35}>
        不复权
        <Triangle />
      </Select>
    </IndicatorBar>

    <PriceChart>
      <KLine />
      <ChartTools>
        <ToolButton>
          <svg width="34" height="30" viewBox="0 0 34 30" {...tool}>
            <path d="M16 2.5L3 15L16 27.5M31 2.5L18 15L31 27.5" />
          </svg>
        </ToolButton>
        <ToolButton>
          <svg width="30" height="30" viewBox="0 0 30 30" {...tool}>
            <path d="M2.5 15H27.5" />
          </svg>
        </ToolButton>
        <ToolButton>
          <svg width="30" height="30" viewBox="0 0 30 30" {...tool}>
            <path d="M2.5 15H27.5M15 2.5V27.5" />
          </svg>
        </ToolButton>
        <ToolButton>
          <svg width="32" height="30" viewBox="0 0 32 30" {...tool}>
            <path d="M29 15H3M14 2.5L2.5 15L14 27.5" />
          </svg>
        </ToolButton>
        <ToolButton size={69} gap={57}>
          <svg width="32" height="30" viewBox="0 0 32 30" {...tool} stroke="#bcbfcb">
            <path d="M3 15H29M18 3L29.5 15L18 27" />
          </svg>
        </ToolButton>
        <ToolButton>
          <svg width="46" height="50" viewBox="0 0 46 50" {...tool}>
            <rect x="3" y="12" width="23" height="31" rx="4" />
            <path d="M19 3C28 3 34 9 35 19M43 13L35 20L28.5 13" />
          </svg>
        </ToolButton>
      </ChartTools>
      <Handle top={816} h={37} radius="2px 2px 5px 5px">
        <svg width="73" height="44" viewBox="0 0 73 44" fill="none" stroke={GRAY} strokeWidth="3">
          <path d="M28 36.5L37 43L46 36.5Z" fill="#f4f7ff" stroke="none" />
          <path d="M24 11L16.5 18.5L24 26M36.5 10V27M49 11L56.5 18.5L49 26" />
        </svg>
      </Handle>
      <Handle top={905} h={13} radius="6px 6px 0 0" />
    </PriceChart>

    <IndicatorBar h={65} top={10}>
      <Select w={121} h={43} size={33}>
        VOL
        <Triangle w={23} h={20} />
      </Select>
      <Gap w={3} />
      <Legend w={244} lh={53} color={NAVY}>MA 5:115.74万</Legend>
      <Legend w={300} lh={53} color={YELLOW}>10:86.81万</Legend>
    </IndicatorBar>
    <Volume />

    <IndicatorBar h={70} top={9}>
      <Select w={151} h={43} size={33}>
        MACD
        <Triangle w={23} h={20} />
      </Select>
      <Gap w={3} />
      <Legend w={128} lh={54} color={NAVY}>DIF:2.93</Legend>
      <Legend w={142} lh={54} color={YELLOW}>DEA:1.82</Legend>
      <Legend w={300} lh={54} color={PURPLE}>MACD:2.22</Legend>
    </IndicatorBar>
    <Macd />

    <IndexBar>
      <StatLabel>深证成指</StatLabel>
      <div>10420.86</div>
      <div>+27.14</div>
      <div>+0.26%</div>
      <svg width="46" height="26" viewBox="0 0 46 26" fill="none" stroke="#959ca9" strokeWidth="2.6">
        <path d="M1 25L23 2L45 25" />
      </svg>
    </IndexBar>

    <ActionBar>
      <TradeButton color={RED}>
        <svg width="62" height="56" viewBox="0 0 62 56" fill="none" stroke="#fff" strokeWidth="4" strokeLinecap="round">
          <path d="M2 16H4.5Q7 16 7.8 19L16 49Q17.5 53 21 53H59" />
          <path d="M40 2V41M28.5 29.5L40 41L51.5 29.5" />
        </svg>
        买
      </TradeButton>
      <TradeButton color={GREEN}>
        <svg width="62" height="56" viewBox="0 0 62 56" fill="none" stroke="#fff" strokeWidth="4" strokeLinecap="round">
          <path d="M2 16H4.5Q7 16 7.8 19L16 49Q17.5 53 21 53H59" />
          <path d="M40 42V3M28.5 14.5L40 3L51.5 14.5" />
        </svg>
        卖
      </TradeButton>
      <Action w={80} left={26} lh={84}>
        <svg width="66" height="64" viewBox="0 0 66 64" fill="none" stroke={BLUE} strokeWidth="4.4" strokeLinecap="round" strokeLinejoin="round">
          <path d="M62 22V11Q62 4 55 4H11Q4 4 4 11V53Q4 60 11 60H20" />
          <path d="M39 60H55Q62 60 62 53V44Q62 37 55 37H28M40 26L28 37L40 48" />
        </svg>
        撤单
      </Action>
      <Action w={120} left={54} lh={76}>
        <svg width="72" height="64" viewBox="0 0 72 64" fill="none" stroke={BLUE} strokeWidth="4.4" strokeLinecap="round" strokeLinejoin="round">
          <path d="M64 22V11Q64 4 57 4H11Q4 4 4 11V51Q4 58 11 58H35" />
          <path d="M16 36L26 24L34 32L47 17" />
          <path d="M43 38H53M65 38H69M43 55H46M58 55H69" />
          <circle cx="59" cy="38" r="5.5" />
          <circle cx="52" cy="55" r="5.5" />
        </svg>
        改自选
      </Action>
      <Action w={80} left={52} lh={76}>
        <svg width="64" height="64" viewBox="0 0 64 64" fill={BLUE}>
          <circle cx="6.5" cy="32" r="5.2" />
          <circle cx="32" cy="32" r="5.2" />
          <circle cx="57" cy="32" r="5.2" />
        </svg>
        更多
      </Action>
    </ActionBar>

    <NavBar>
      <svg width="560" height="58" viewBox="329 2594 560 58" fill="none" stroke="#d0d0d0" strokeWidth="4.6" strokeLinejoin="round">
        <path d="M375.5 2599V2647Q375 2649 373 2648L336 2625.5Q333 2623 336 2620.5L373 2598Q375 2597 375.5 2599Z" />
        <circle cx="608" cy="2623" r="24.8" />
        <rect x="839" y="2601" width="44" height="44" rx="1.5" />
      </svg>
    </NavBar>
  </Screen>
);

export default App;
